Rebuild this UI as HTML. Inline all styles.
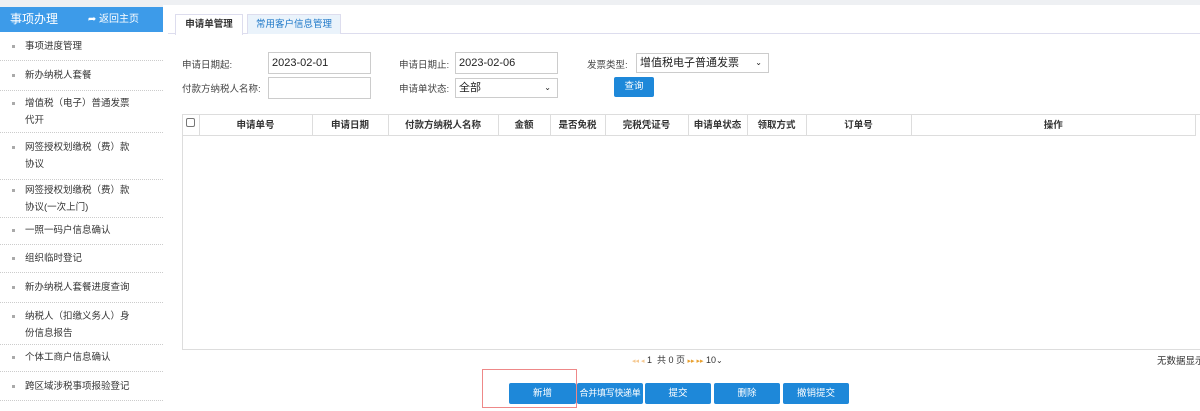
<!DOCTYPE html>
<html><head><meta charset="utf-8"><style>
*{box-sizing:border-box;margin:0;padding:0}
html,body{width:1200px;height:411px;overflow:hidden}
body{background:#eef0f3;font-family:"Liberation Sans","Noto Sans CJK SC",sans-serif;font-size:10px;color:#333;position:relative;white-space:nowrap}
.abs{position:absolute}
.side{left:0;top:7px;width:163px;height:404px;background:#fff}
.sh{height:25px;background:#3d9be9;color:#fff;font-size:12px;line-height:25px;padding-left:10px;position:relative}
.sh span{position:absolute;right:24px;font-size:10px}
.mi{position:absolute;left:0;width:163px;border-bottom:1px dotted #ccc;font-size:9.5px;color:#333;padding-left:25px;line-height:17px}
.mi i{position:absolute;left:12px;width:3px;height:3px;background:#aaa;margin-top:7px}
.main{left:163px;top:5px;width:1037px;height:406px;background:#fff}
.tab{top:14px;height:20px;line-height:20px;text-align:center;font-size:9.5px;border:1px solid #dde;border-bottom:none}
.lbl{font-size:9.5px;color:#444}
.inp{border:1px solid #ccc;height:22px;font-size:11px;line-height:20px;padding-left:3px;color:#222}
.btn{background:#1e88d9;color:#fff;text-align:center;font-size:9.5px;border-radius:2px;white-space:nowrap;overflow:hidden}
table{border-collapse:collapse}
th{font-size:9.5px;font-weight:bold;border-right:1px solid #ddd;height:21px;color:#333}
</style></head><body>
<div class="abs side">
<div class="sh">事项办理<span>➦ 返回主页</span></div>
</div>
<div class="mi" style="top:33px;height:28px;padding-top:5px"><i></i>事项进度管理</div>
<div class="mi" style="top:61px;height:30px;padding-top:6px"><i></i>新办纳税人套餐</div>
<div class="mi" style="top:91px;height:42px;padding-top:4px"><i></i>增值税（电子）普通发票<br>代开</div>
<div class="mi" style="top:133px;height:47px;padding-top:6px"><i></i>网签授权划缴税（费）款<br>协议</div>
<div class="mi" style="top:180px;height:38px;padding-top:2px"><i></i>网签授权划缴税（费）款<br>协议(一次上门)</div>
<div class="mi" style="top:218px;height:27px;padding-top:4px"><i></i>一照一码户信息确认</div>
<div class="mi" style="top:245px;height:28px;padding-top:5px"><i></i>组织临时登记</div>
<div class="mi" style="top:273px;height:30px;padding-top:6px"><i></i>新办纳税人套餐进度查询</div>
<div class="mi" style="top:303px;height:42px;padding-top:5px"><i></i>纳税人（扣缴义务人）身<br>份信息报告</div>
<div class="mi" style="top:345px;height:27px;padding-top:4px"><i></i>个体工商户信息确认</div>
<div class="mi" style="top:372px;height:29px;padding-top:6px"><i></i>跨区域涉税事项报验登记</div>
<div class="abs main"></div>
<div class="abs" style="left:168px;top:33px;width:1032px;border-top:1px solid #dde"></div>
<div class="abs tab" style="left:175px;width:68px;background:#fff;font-weight:bold;height:21px">申请单管理</div>
<div class="abs tab" style="left:247px;width:94px;background:#eaf3fb;color:#1e78c8">常用客户信息管理</div>
<div class="abs lbl" style="left:182px;top:57px">申请日期起:</div>
<div class="abs inp" style="left:268px;top:52px;width:103px">2023-02-01</div>
<div class="abs lbl" style="left:182px;top:81px">付款方纳税人名称:</div>
<div class="abs inp" style="left:268px;top:77px;width:103px"></div>
<div class="abs lbl" style="left:399px;top:57px">申请日期止:</div>
<div class="abs inp" style="left:455px;top:52px;width:103px">2023-02-06</div>
<div class="abs lbl" style="left:399px;top:81px">申请单状态:</div>
<div class="abs inp" style="left:455px;top:78px;width:103px;height:20px;line-height:18px">全部<span style="position:absolute;right:6px;font-size:8px">⌄</span></div>
<div class="abs lbl" style="left:587px;top:57px">发票类型:</div>
<div class="abs inp" style="left:636px;top:53px;width:133px;height:20px;line-height:18px">增值税电子普通发票<span style="position:absolute;right:6px;font-size:8px">⌄</span></div>
<div class="abs btn" style="left:614px;top:77px;width:40px;height:20px;line-height:20px">查询</div>
<div class="abs" style="left:182px;top:114px;width:1018px;height:254px;border:1px solid #ddd;border-right:none"></div>
<table class="abs" style="left:182px;top:114px;width:1014px;border-bottom:1px solid #ddd">
<tr><th style="width:17px"><span style="display:inline-block;width:9px;height:9px;border:1px solid #777;border-radius:2px"></span></th>
<th style="width:113px">申请单号</th><th style="width:76px">申请日期</th><th style="width:110px">付款方纳税人名称</th><th style="width:52px">金额</th><th style="width:55px">是否免税</th><th style="width:83px">完税凭证号</th><th style="width:59px">申请单状态</th><th style="width:59px">领取方式</th><th style="width:105px">订单号</th><th>操作</th></tr></table>
<div class="abs" style="left:182px;top:349px;width:1018px;border-top:1px solid #ddd;height:19px;background:#fff"></div>
<div class="abs" style="left:632px;top:353px;font-size:9px;color:#333"><span style="color:#f5c890;font-size:7px">◂◂ ◂</span> 1 &nbsp;共 0 页 <span style="color:#e8a030;font-size:7px">▸▸ ▸▸</span> 10<span style="font-size:8px">⌄</span></div>
<div class="abs" style="left:1157px;top:353px;font-size:9.5px">无数据显示</div>
<div class="abs" style="left:482px;top:369px;width:95px;height:39px;border:1px solid #e88"></div>
<div class="abs btn" style="left:509px;top:383px;width:67px;height:21px;line-height:21px">新增</div>
<div class="abs btn" style="left:577px;top:383px;width:66px;height:21px;line-height:21px;font-size:9px;letter-spacing:-0.3px">合并填写快递单</div>
<div class="abs btn" style="left:645px;top:383px;width:66px;height:21px;line-height:21px">提交</div>
<div class="abs btn" style="left:714px;top:383px;width:66px;height:21px;line-height:21px">删除</div>
<div class="abs btn" style="left:783px;top:383px;width:66px;height:21px;line-height:21px">撤销提交</div>
</body></html>
